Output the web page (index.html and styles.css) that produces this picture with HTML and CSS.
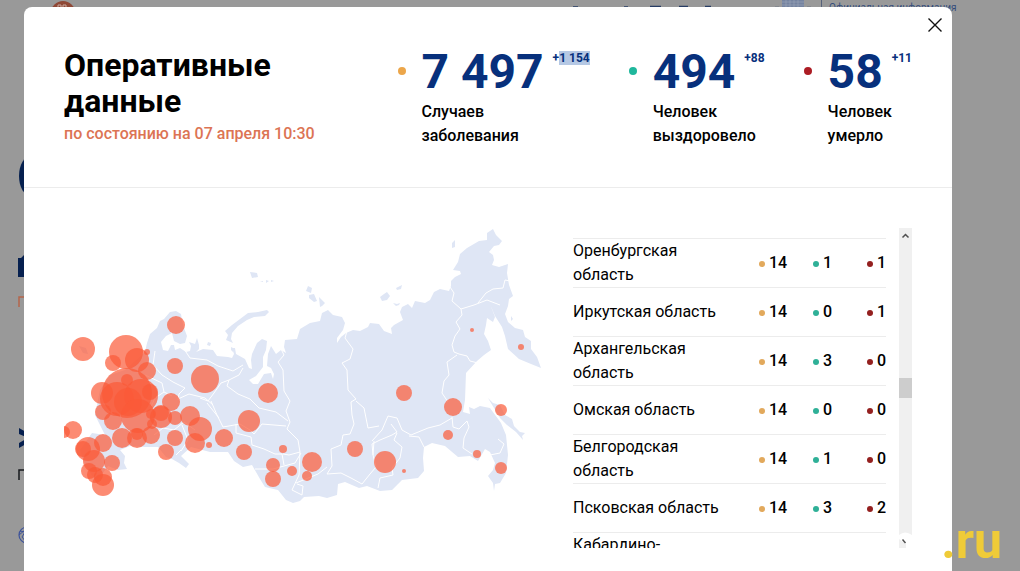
FILE: index.html
```html
<!DOCTYPE html>
<html lang="ru">
<head>
<meta charset="utf-8">
<meta name="viewport" content="width=device-width, initial-scale=1">
<title>Оперативные данные</title>
<link rel="stylesheet" href="styles.css">
</head>
<body>
<div class="backdrop" aria-hidden="true">
  <svg class="backdrop-art" width="1020" height="571" viewBox="0 0 1020 571">
    <circle cx="63" cy="13" r="12" fill="#8f4836"/>
    <path d="M58 7v-2h3v2m2 0v-2h3v2" fill="none" stroke="#c9aaa0"/>
    <path d="M573 7h5M624 7h4M650 6.500h11M679 6.500h9M705 6.500h6" stroke="#273c64" stroke-width="1.500"/>
    <path d="M782 0h22v8h-22z" fill="#7583a0"/>
    <path d="M782 2h22M782 5h22M786 0v8M790 0v8M794 0v8M798 0v8" stroke="#9aa5ba" stroke-width=".6"/>
    <path d="M775 7h4M807 7h4" stroke="#707887"/>
    <path d="M821.500 0v8" stroke="#56617a"/>
    <ellipse cx="31" cy="176" rx="12" ry="20" fill="#06204f"/>
    <path d="M18 258h3l3-3v22h-6z" fill="#06204f"/>
    <path d="M19 307v-10h8" fill="none" stroke="#b5654b" stroke-width="1.500"/>
    <path d="M19 428l7 4v5l-7-3zM19 443l7-4v5l-7 4z" fill="#06204f"/>
    <path d="M19 480v-10h8" fill="none" stroke="#16181d" stroke-width="1.500"/>
    <circle cx="27" cy="535" r="8" fill="none" stroke="#3d539b" stroke-width="1.200"/>
    <path d="M20 531l5 1-3 5 4 5M19 535l6-5" fill="none" stroke="#3d539b"/>
  </svg>
  <span class="backdrop-note">Официальная информация</span>
</div>

<main class="modal" role="dialog" aria-labelledby="title">
  <button class="close" type="button" aria-label="Закрыть">
    <svg width="16" height="16" viewBox="0 0 16 16"><path d="M1.500 1.500l13 13M14.500 1.500l-13 13" stroke="#111" stroke-width="1.400"/></svg>
  </button>
  <header class="head">
    <div class="heading">
      <h1 id="title">Оперативные данные</h1>
      <p class="date">по состоянию на 07 апреля 10:30</p>
    </div>
    <div class="stats">
      <section class="stat">
        <i class="dot sick"></i>
        <div>
          <div class="value">7 497<span class="delta">+<span class="selected">1 154</span></span></div>
          <p class="label">Случаев<br>заболевания</p>
        </div>
      </section>
      <section class="stat">
        <i class="dot healed"></i>
        <div>
          <div class="value">494<span class="delta">+88</span></div>
          <p class="label">Человек<br>выздоровело</p>
        </div>
      </section>
      <section class="stat">
        <i class="dot died"></i>
        <div>
          <div class="value">58<span class="delta">+11</span></div>
          <p class="label">Человек<br>умерло</p>
        </div>
      </section>
    </div>
  </header>

  <div class="content">
    <svg class="map" viewBox="64 228 480 284" role="img" aria-label="Карта России">
      <g fill="#dfe6f5">
        <path d="M145 352L147 343L150 334L157 328L160 321L164 319L170 312L176 311L181 314L182 320L184 328L187 336L185 343L180 344L174 341L172 333L166 336L161 342L163 350L168 351L171 345L174 345L175 350L180 348L186 352L190 351L191 346L189 342L195 344L197 338L199 345L199 349L196 352L203 349L213 350L217 356L228 357L232 358L234 354L232 348L235 348L236 354L245 359L249 368L252 369L251 360L252 354L257 343L262 339L267 341L266 350L263 357L263 367L256 376L249 380L253 384L258 384L264 374L271 373L273 379L274 374L271 368L267 366L268 354L271 346L276 354L281 350L286 353L284 347L285 340L297 339L300 329L310 323L320 321L322 313L328 310L333 315L342 317L345 323L343 330L337 338L337 343L341 337L346 333L353 330L360 331L368 327L370 323L379 324L384 331L392 334L391 328L394 325L403 320L400 312L402 307L408 304L412 308L415 301L425 303L430 300L434 292L440 289L449 291L451 286L451 281L455 277L461 274L460 271L453 270L458 262L460 254L467 248L479 241L487 240L487 233L493 229L496 235L502 241L499 245L494 246L489 252L493 255L494 260L492 265L499 267L508 264L507 273L509 285L513 296L509 299L508 306L505 314L508 322L515 328L523 330L525 337L531 341L531 349L537 357L541 368L531 364L519 359L508 349L505 336L502 327L495 316L490 304L495 317L493 322L487 318L486 325L484 334L488 341L491 350L484 355L477 361L466 373L465 400L463 412L470 414L469 407L474 409L480 406L490 408L501 423L506 435L508 455L506 473L500 483L495 484L494 491L493 483L488 476L493 470L495 463L490 452L485 449L478 461L470 456L458 457L445 446L432 443L424 447L423 458L424 471L418 478L402 480L392 490L380 491L367 486L359 488L345 482L338 484L337 495L327 498L319 496L304 497L300 501L293 503L286 500L278 490L265 487L260 479L252 465L243 467L234 461L228 452L210 452L191 447L181 456L189 464L186 468L179 463L172 459L166 457L158 447L145 447L130 446L120 450L125 456L124 463L127 469L118 470L108 466L100 477L95 480L85 465L80 450L92 433L105 435L95 415L100 390L110 375L125 370Z"/>
        <path d="M225 331L232 325L240 319L248 313L258 312L267 310L269 312L265 316L254 317L247 320L238 326L232 333L231 339L233 343L226 340L228 335ZM250 272l7 1 1 4-6 1zM260 282l3-1v1zM266 280l3 1-3 2zM271 280l3 1-3 1zM308 286l4 2-1 5-5-2zM309 295l5-1 3 7-3 1-5-4zM319 297l6 6-3 3-2 1zM380 297l4-3 3-2 3 4-3 4-5 1zM396 288l6-3-1 4-4 1zM393 303l4 1 3-1-1 2-3 1zM452 243l3-3v7l-3 1zM208 342l3 1-1 3-3-1zM511 316l2 3-2 2zM537 324l3 0M541 370l1 8M488 398L493 403L500 405L505 415L512 419L514 426L520 432L525 433L522 436L523 440L516 432L507 425L500 418L494 408ZM79 346l7 2 2 6-5-1zM231 347l2 1v4l-2-2z"/>
      </g>
      <g fill="none" stroke="#fff" stroke-width="1" stroke-linejoin="round">
        <path d="M155 351L153 365L162 375L173 382L185 388L179 394L178 400M184 349L190 358L207 360L218 366L233 371L243 365M243 368L239 375L229 380L221 383L214 393L208 401L200 398M229 380L227 386L238 394L250 399L259 408L276 412L288 421M211 401L217 415L223 427L240 424L250 430L254 434L262 424L286 426M236 424L236 433L251 437L252 445L264 449L275 454L282 454L284 465M279 345L284 355L278 362L283 370L284 391L290 401L286 411L290 422L287 429L298 440L300 452L289 455L283 454M255 469L273 469L295 463L301 453M300 452L299 475L292 490L302 495L303 486L297 484M296 483L318 474L327 467M347 331L345 338L353 349L350 359L342 363L347 370L348 390L356 399L351 402L352 415L354 424L350 434L343 435L341 445L331 449L332 466L327 474L341 473L351 478L362 484L370 474L376 467L373 455L374 441M356 401L364 408L368 428L379 426M372 441L382 430L388 416L397 418L402 430L411 435L428 428L440 425L452 418M391 424L397 432L392 435L380 440L372 444L373 455M397 433L394 440L402 447L400 458L392 468L393 475L380 478L378 488M409 436L419 437L424 447M450 287L454 293L452 301L461 309L474 305L487 300L500 305M478 303L486 293L493 289L503 288L505 280L510 281M461 309L462 315L456 322L460 329L455 336L452 345L454 352L459 354L467 356L470 361L478 363M457 355L447 362L449 375L444 381L442 393L448 402M452 417L453 427L459 429L467 421L469 427L464 438L463 448L472 454M485 450L490 455L500 453L504 444L498 439M145 375L162 383L164 392L172 396M164 392L155 398L151 407M178 399L189 394L205 398L213 405M207 403L219 418M154 435L163 428L174 430L184 422L195 430M182 425L188 440L181 451M181 450L176 455"/>
      </g>
      <g fill="#fb5a38" fill-opacity=".7">
        <circle cx="83" cy="349" r="12"/><circle cx="126" cy="352" r="17"/><circle cx="113" cy="363" r="8"/><circle cx="137" cy="360" r="12"/><circle cx="147" cy="352" r="3"/><circle cx="147" cy="371" r="9"/>
        <circle cx="176" cy="325" r="9"/><circle cx="175" cy="366" r="8"/><circle cx="205" cy="379" r="14"/><circle cx="171" cy="402" r="9"/><circle cx="127" cy="393" r="25"/><circle cx="102" cy="393" r="11"/>
        <circle cx="127" cy="380" r="6"/><circle cx="117" cy="399" r="17"/><circle cx="141" cy="396" r="17"/><circle cx="128" cy="402" r="14"/><circle cx="150" cy="392" r="8"/><circle cx="103" cy="412" r="8"/><circle cx="113" cy="421" r="9"/><circle cx="138" cy="416" r="17"/>
        <circle cx="161" cy="417" r="11"/><circle cx="161" cy="413" r="8"/><circle cx="151" cy="414" r="5"/><circle cx="152" cy="424" r="5"/><circle cx="175" cy="418" r="7"/><circle cx="190" cy="416" r="10"/><circle cx="200" cy="429" r="12"/><circle cx="195" cy="443" r="10"/><circle cx="209" cy="445" r="3"/><circle cx="224" cy="438" r="9"/>
        <circle cx="175" cy="438" r="8"/><circle cx="166" cy="452" r="8"/><circle cx="122" cy="438" r="10"/><circle cx="137" cy="438" r="10"/><circle cx="137" cy="434" r="6"/><circle cx="151" cy="435" r="9"/><circle cx="73" cy="430" r="9"/><circle cx="64" cy="432" r="6"/>
        <circle cx="88" cy="449" r="12"/><circle cx="83" cy="449" r="8"/><circle cx="103" cy="443" r="9"/><circle cx="94" cy="461" r="11"/><circle cx="112" cy="463" r="8"/><circle cx="89" cy="471" r="8"/><circle cx="95" cy="475" r="8"/><circle cx="103" cy="477" r="9"/><circle cx="103" cy="485" r="11"/>
        <circle cx="268" cy="393" r="10"/><circle cx="249" cy="421" r="11"/><circle cx="244" cy="452" r="8"/><circle cx="283" cy="449" r="4"/><circle cx="273" cy="465" r="7"/><circle cx="273" cy="479" r="8"/><circle cx="292" cy="471" r="5"/><circle cx="312" cy="462" r="10"/><circle cx="307" cy="476" r="5"/>
        <circle cx="355" cy="449" r="8"/><circle cx="385" cy="462" r="11"/><circle cx="404" cy="471" r="2"/><circle cx="404" cy="393" r="8"/><circle cx="453" cy="407" r="9"/><circle cx="448" cy="435" r="5"/><circle cx="477" cy="454" r="4"/><circle cx="501" cy="468" r="6"/><circle cx="501" cy="410" r="6"/><circle cx="472" cy="330" r="2"/><circle cx="521" cy="347" r="3"/>
      </g>
    </svg>

    <div class="regions">
      <div class="viewport">
        <table>
          <tbody>
            <tr><th scope="row">Оренбургская область</th><td class="sick">14</td><td class="healed">1</td><td class="died">1</td></tr>
            <tr><th scope="row">Иркутская область</th><td class="sick">14</td><td class="healed">0</td><td class="died">1</td></tr>
            <tr><th scope="row">Архангельская область</th><td class="sick">14</td><td class="healed">3</td><td class="died">0</td></tr>
            <tr><th scope="row">Омская область</th><td class="sick">14</td><td class="healed">0</td><td class="died">0</td></tr>
            <tr><th scope="row">Белгородская область</th><td class="sick">14</td><td class="healed">1</td><td class="died">0</td></tr>
            <tr><th scope="row">Псковская область</th><td class="sick">14</td><td class="healed">3</td><td class="died">2</td></tr>
            <tr class="partial"><th scope="row">Кабардино-</th><td></td><td></td><td></td></tr>
          </tbody>
        </table>
      </div>
      <div class="scrollbar" aria-hidden="true">
        <svg width="13" height="16" viewBox="0 0 13 16"><path d="M3.500 9.500l3-3 3 3" fill="none" stroke="#505050" stroke-width="1.500"/></svg>
        <span class="thumb"></span>
        <svg class="down" width="13" height="16" viewBox="0 0 13 16"><path d="M0 3q6-5 13 0v13H7v-4L0 7z" fill="#fff"/><path d="M3.500 7.500l3 3.500" fill="none" stroke="#505050" stroke-width="1.500"/></svg>
      </div>
    </div>
  </div>
</main>
<span class="watermark">.ru</span>
</body>
</html>
```
FILE: styles.css
```css
* {
  box-sizing: border-box;
}

body {
  margin: 0;
  min-height: 100vh;
  display: flex;
  position: relative;
  overflow: hidden;
  background: #999;
  color: #000;
  font: 16px/24px Roboto, "Liberation Sans", sans-serif;
}

h1,
p {
  margin: 0;
}

.backdrop {
  position: absolute;
  inset: 0;
  overflow: hidden;
}

.backdrop-art {
  display: block;
}

.backdrop-note {
  position: absolute;
  left: 829px;
  top: 0;
  color: #344d7c;
  font-size: 10px;
  line-height: 16px;
}

.modal {
  position: relative;
  flex: 1;
  margin: 7px 68px 0 24px;
  background: #fff;
  border-radius: 8px 8px 0 0;
}

.close {
  position: absolute;
  top: 10px;
  right: 9px;
  padding: 0;
  border: 0;
  background: none;
  line-height: 0;
  cursor: pointer;
}

.head {
  display: flex;
  justify-content: space-between;
  padding: 40px 40px 39px;
  border-bottom: 1px solid #ececec;
}

.heading {
  width: 270px;
}

h1 {
  width: 220px;
  font-size: 32px;
  font-weight: 700;
  line-height: 36px;
}

.date {
  margin-top: 3px;
  color: #dc7454;
  font-weight: 500;
}

.stats {
  display: flex;
  gap: 39px;
}

.stat {
  display: flex;
  gap: 16px;
}

.dot {
  width: 8px;
  height: 8px;
  margin-top: 20px;
  border-radius: 50%;
}

.dot.sick {
  background: #eca64a;
}

.dot.healed {
  background: #1fb79c;
}

.dot.died {
  background: #ac1c24;
}

.value {
  display: flex;
  align-items: flex-start;
  gap: 9px;
  color: #07307c;
  font-size: 48px;
  font-weight: 700;
  line-height: 50px;
}

.delta {
  font-size: 12px;
  line-height: 14px;
  margin-top: 4px;
}

.selected {
  background: #b5c8e4;
}

.label {
  margin-top: 3px;
  font-weight: 500;
}

.content {
  display: flex;
  justify-content: space-between;
  gap: 29px;
  padding: 40px 40px 23px;
}

.map {
  flex: 1;
  min-width: 0;
  align-self: flex-start;
}

.regions {
  display: flex;
  gap: 13px;
  height: 320px;
}

.viewport {
  width: 313px;
  padding-top: 10px;
  overflow: hidden;
}

table {
  width: 100%;
  border-spacing: 0;
  table-layout: fixed;
}

th,
td {
  height: 49px;
  padding: 0;
  border-top: 1px solid #ececec;
  vertical-align: middle;
  text-align: left;
}

th {
  width: 186px;
  padding-right: 24px;
  font-weight: 400;
}

.partial th {
  vertical-align: top;
}

td {
  font-weight: 500;
}

td.sick {
  width: 54px;
}

td.died {
  text-align: right;
}

td:not(:empty)::before {
  content: "";
  display: inline-block;
  width: 6px;
  height: 6px;
  margin-right: 4px;
  border-radius: 50%;
  vertical-align: 1px;
}

td.sick::before {
  background: #e2a95c;
}

td.healed::before {
  background: #2fb097;
}

td.died::before {
  background: #94201f;
}

.scrollbar {
  display: flex;
  flex-direction: column;
  width: 13px;
  background: #f0f0f0;
}

.thumb {
  height: 20px;
  margin-top: 134px;
  background: #cdcdcd;
}

.down {
  margin-top: auto;
}

.watermark {
  position: absolute;
  right: 18px;
  bottom: 0;
  color: #efcb38;
  font-size: 50px;
  font-weight: 700;
  line-height: 60px;
}
```
